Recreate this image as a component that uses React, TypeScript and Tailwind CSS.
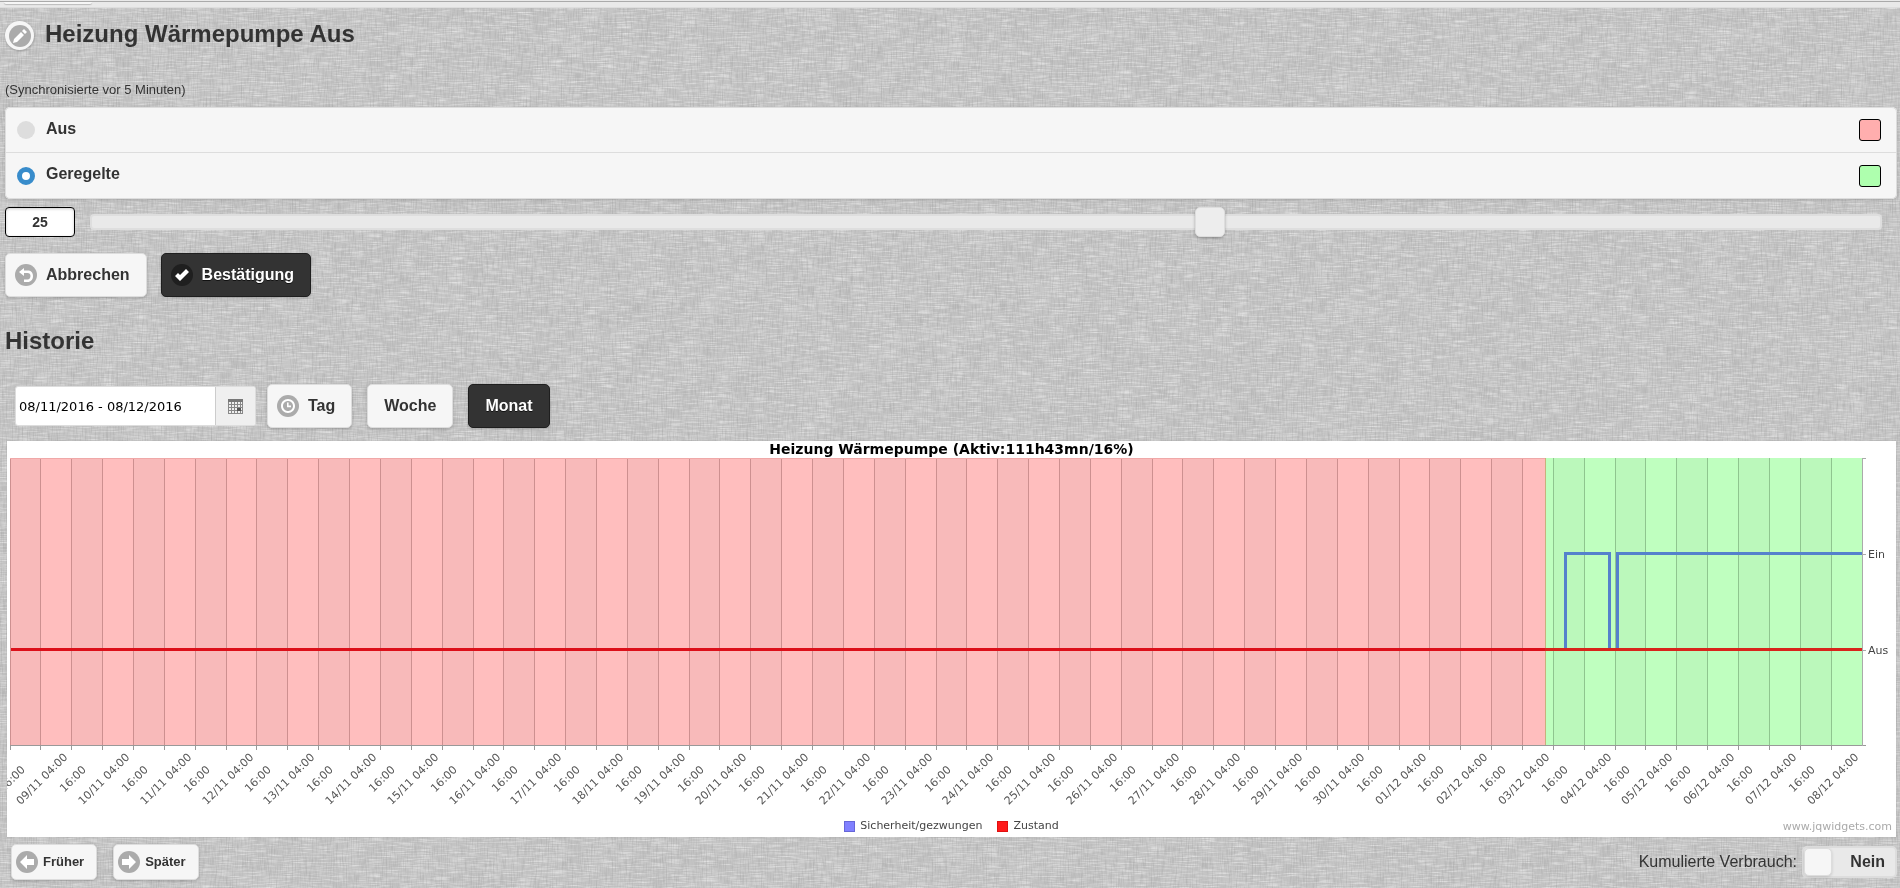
import React, { useLayoutEffect, useRef, useState } from 'react';
import clsx from 'clsx';

const ICONS = {
  edit: 'M1,10l-1,4l4-1l7-7L8,3L1,10z M11,0L9,2l3,3l2-2L11,0z',
  check: 'M14,4L11,1L5,7L3,5L0,8L5,13z',
  back: 'M5,0L0,4L5,8V5H8.5C10.4,5,11.5,6.2,11.5,8S10.4,11.5,8.5,11.5H5V14H8.5C12,14,14,11.5,14,8S12,2.5,8.5,2.5H5z',
  left: 'M7,4V0L0,7L7,14V10H14V4z',
  right: 'M7,4V0L14,7L7,14V10H0V4z',
  clock: 'M7,0C3.1,0,0,3.1,0,7s3.1,7,7,7s7-3.1,7-7S10.9,0,7,0z M7,12c-2.8,0-5-2.2-5-5s2.2-5,5-5s5,2.2,5,5S9.8,12,7,12z M6,3.5h1.6V6.6H10V8.2H6z',
};

function RoundIcon({ name, dark }: { name: keyof typeof ICONS; dark?: boolean }) {
  return (
    <span className={clsx('flex size-[22px] shrink-0 items-center justify-center rounded-full', dark ? 'bg-[#1f1f1f]' : 'bg-[#ababab]')}>
      <svg viewBox="0 0 14 14" className="size-[14px]" fill="#fff" fillRule="evenodd">
        <path d={ICONS[name]} />
      </svg>
    </span>
  );
}

interface ButtonProps {
  icon?: keyof typeof ICONS;
  active?: boolean;
  small?: boolean;
  onClick?: () => void;
  children: React.ReactNode;
}

function Button({ icon, active, small, onClick, children }: ButtonProps) {
  return (
    <button
      type="button"
      onClick={onClick}
      className={clsx(
        'flex items-center rounded-[5px] border font-bold shadow-[0_1px_3px_rgba(0,0,0,0.2)]',
        active ? 'border-[#1f1f1f] bg-[#333] text-white [text-shadow:0_1px_0_#111]' : 'border-[#ddd] bg-[#f6f6f6] text-[#333]',
        small ? 'h-9 gap-[5px] pl-1 pr-3 text-[13px]' : 'h-11 gap-[9px] text-base',
        !small && (icon ? 'pl-[9px] pr-4' : 'px-4')
      )}
    >
      {icon && <RoundIcon name={icon} dark={active} />}
      <span>{children}</span>
    </button>
  );
}

// Woven linen background: fine horizontal and vertical threads over soft blotches
function Linen() {
  return (
    <svg className="pointer-events-none fixed inset-0 -z-10 size-full" aria-hidden="true">
      <filter id="weft" x="0" y="0" width="100%" height="100%" colorInterpolationFilters="sRGB">
        <feTurbulence type="fractalNoise" baseFrequency="0.06 0.8" numOctaves="2" seed="4" />
        <feColorMatrix values="0 0 0 0 1  0 0 0 0 1  0 0 0 0 1  1.4 0 0 0 -0.6" />
      </filter>
      <filter id="warp" x="0" y="0" width="100%" height="100%" colorInterpolationFilters="sRGB">
        <feTurbulence type="fractalNoise" baseFrequency="0.8 0.07" numOctaves="2" seed="9" />
        <feColorMatrix values="0 0 0 0 0.5  0 0 0 0 0.5  0 0 0 0 0.5  1.4 0 0 0 -0.6" />
      </filter>
      <filter id="blotch" x="0" y="0" width="100%" height="100%" colorInterpolationFilters="sRGB">
        <feTurbulence type="fractalNoise" baseFrequency="0.03 0.04" numOctaves="2" seed="2" />
        <feColorMatrix values="0 0 0 0 1  0 0 0 0 1  0 0 0 0 1  0.8 0 0 0 -0.3" />
      </filter>
      <rect width="100%" height="100%" fill="#c2c2c2" />
      <rect width="100%" height="100%" filter="url(#blotch)" opacity="0.25" />
      <rect width="100%" height="100%" filter="url(#weft)" opacity="0.8" />
      <rect width="100%" height="100%" filter="url(#warp)" opacity="0.4" />
    </svg>
  );
}

const SLOTS = 60;
const TOP = 17;
const STEP = 96;
const BOTTOM = TOP + 3 * STEP;
const Y_ON = TOP + STEP;
const Y_OFF = TOP + 2 * STEP;

// Slots are 12 hours long and start on 08/11 at 16:00
function slotLabel(i: number) {
  if (i % 2 === 0) return '16:00';
  const date = new Date(2016, 10, 9 + (i - 1) / 2);
  const pad = (n: number) => String(n).padStart(2, '0');
  return `${pad(date.getDate())}/${pad(date.getMonth() + 1)} 04:00`;
}

function HistoryChart() {
  const ref = useRef<HTMLDivElement>(null);
  const [width, setWidth] = useState(0);

  useLayoutEffect(() => {
    const el = ref.current;
    if (!el) return;
    const update = () => setWidth(el.clientWidth);
    update();
    const observer = new ResizeObserver(update);
    observer.observe(el);
    return () => observer.disconnect();
  }, []);

  const left = 3;
  const right = Math.max(width - 34, left + SLOTS);
  const x = (slot: number) => Math.floor(left + ((right - left) * slot) / SLOTS);
  const change = x(49.75);
  const slots = Array.from({ length: SLOTS }, (_, i) => i);

  return (
    <div ref={ref} className="ml-[7px] mr-1 overflow-hidden bg-white shadow-[0_0_1px_#999]">
      <h3 className="-mb-[17px] text-center font-[DejaVu_Sans,sans-serif] text-[14px] leading-[17px] font-bold text-black">
        Heizung Wärmepumpe (Aktiv:111h43mn/16%)
      </h3>
      <svg width="100%" height="376" className="block font-[DejaVu_Sans,sans-serif] text-[11px]">
        <rect x={left} y={TOP} width={change - left} height={BOTTOM - TOP} fill="#ffbebe" />
        <rect x={change} y={TOP} width={right - change} height={BOTTOM - TOP} fill="#bfffbf" />
        {slots.filter((i) => i % 2 === 0).map((i) => (
          <rect key={i} x={x(i)} y={TOP} width={x(i + 1) - x(i)} height={BOTTOM - TOP} fill="#888" opacity="0.06" />
        ))}
        <g shapeRendering="crispEdges">
          {slots.map((i) => (
            <React.Fragment key={i}>
              <line x1={x(i) + 0.5} x2={x(i) + 0.5} y1={TOP} y2={BOTTOM} stroke={x(i) < change ? '#cd9090' : '#8fc58f'} />
              <line x1={x(i) + 0.5} x2={x(i) + 0.5} y1={BOTTOM} y2={BOTTOM + 4} stroke="#999" />
            </React.Fragment>
          ))}
          <line x1={change + 0.5} x2={change + 0.5} y1={TOP} y2={BOTTOM} stroke="#c9b07c" />
          <line x1={left} x2={change} y1={TOP + 0.5} y2={TOP + 0.5} stroke="#f0a8a8" />
          <line x1={left} x2={right + 4} y1={BOTTOM - 0.5} y2={BOTTOM - 0.5} stroke="#999" />
          <line x1={right + 0.5} x2={right + 0.5} y1={TOP} y2={BOTTOM} stroke="#aaa" />
          {[TOP, Y_ON, Y_OFF].map((y) => (
            <line key={y} x1={right} x2={right + 4} y1={y + 0.5} y2={y + 0.5} stroke="#aaa" />
          ))}
        </g>
        <path
          d={`M${x(50.4) + 0.5},${Y_OFF}V${Y_ON - 0.5}H${x(51.82) + 0.5}V${Y_OFF} M${x(52.08) + 0.5},${Y_OFF}V${Y_ON - 0.5}H${right}`}
          fill="none"
          stroke="#5581cc"
          strokeWidth="3"
        />
        <line x1={left + 1} x2={change} y1={Y_OFF - 0.5} y2={Y_OFF - 0.5} stroke="#dc101a" strokeWidth="3" />
        <line x1={change} x2={right} y1={Y_OFF - 0.5} y2={Y_OFF - 0.5} stroke="#d8241c" strokeWidth="3" />
        <text x={right + 6} y={Y_ON + 4} fill="#444">Ein</text>
        <text x={right + 6} y={Y_OFF + 4} fill="#444">Aus</text>
        {slots.map((i) => (
          <text key={i} transform={`translate(${x(i) + 2} 338) rotate(-45)`} textAnchor="middle" dominantBaseline="central" fill="#555">
            {slotLabel(i)}
          </text>
        ))}
      </svg>
      <div className="grid h-5 grid-cols-[1fr_auto_1fr] items-start font-[DejaVu_Sans,sans-serif] text-[11px] leading-[18px] text-[#444]">
        <ul className="col-start-2 flex gap-[15px]">
          <li className="flex items-center gap-[5px]"><i className="size-[11px] border border-[#6666d8] bg-[#8080ff]" />Sicherheit/gezwungen</li>
          <li className="flex items-center gap-[5px]"><i className="size-[11px] border border-[#e01010] bg-[#ff1a1a]" />Zustand</li>
        </ul>
        <a href="https://www.jqwidgets.com" className="justify-self-end pt-px pr-1 text-[#aaa]">www.jqwidgets.com</a>
      </div>
    </div>
  );
}

const MODES = [
  { id: 'off', label: 'Aus', swatch: 'bg-[#ffaeae]' },
  { id: 'regulated', label: 'Geregelte', swatch: 'bg-[#aeffae]' },
];

export default function App() {
  const [mode, setMode] = useState('regulated');
  const [value, setValue] = useState(25);
  const [range, setRange] = useState('month');
  const [dates, setDates] = useState('08/11/2016 - 08/12/2016');
  const [cumulative, setCumulative] = useState(false);

  return (
    <div className="relative isolate min-h-screen font-[Liberation_Sans,Arial,sans-serif] text-[#333]">
      <Linen />
      <div className="h-2 border-b border-[#ddd] bg-[#e9e9e9] pt-px">
        <div className="h-[3px] border-t border-[#aaa] pl-1">
          <div className="h-[2px] w-[88px] rounded-b bg-[#f6f6f6] shadow-[0_1px_1px_#bbb]" />
        </div>
      </div>

      <header className="flex items-start gap-[11px] pt-[13px] pl-[5px]">
        <button type="button" aria-label="Bearbeiten" className="flex size-[29px] items-center justify-center rounded-full bg-[#f6f6f6] shadow-[0_1px_3px_rgba(0,0,0,0.25)]">
          <RoundIcon name="edit" />
        </button>
        <h1 className="text-2xl leading-[26px] font-bold">Heizung Wärmepumpe Aus</h1>
      </header>

      <form className="pr-[3px] pl-[5px]" onSubmit={(e) => e.preventDefault()}>
        <p className="pt-[31px] text-[13px] leading-[18px]">(Synchronisierte vor 5 Minuten)</p>

        <fieldset className="mt-2 divide-y divide-[#ddd] rounded-[5px] border border-[#ddd] bg-[#f6f6f6] shadow-[0_1px_3px_rgba(0,0,0,0.15)]">
          {MODES.map((m) => (
            <label key={m.id} className="flex h-[45px] items-center pr-[15px] pl-[11px] font-bold">
              <input
                type="radio"
                name="mode"
                checked={mode === m.id}
                onChange={() => setMode(m.id)}
                className="size-[18px] appearance-none rounded-full bg-[#ddd] checked:border-[5px] checked:border-[#388ccb] checked:bg-white"
              />
              <span className="flex-1 pb-[3px] pl-[11px]">{m.label}</span>
              <span className={clsx('size-[22px] rounded-[3px] border border-black', m.swatch)} />
            </label>
          ))}
        </fieldset>

        <div className="mt-2 flex items-center gap-[15px] pr-[15px]">
          <input
            type="text"
            aria-label="Wert"
            value={value}
            onChange={(e) => setValue(Number(e.target.value) || 0)}
            className="h-[30px] w-[70px] rounded border border-black bg-white text-center text-[14px] font-bold shadow-[inset_0_1px_3px_rgba(0,0,0,0.2)]"
          />
          <div className="flex h-4 flex-1 items-center rounded border-2 border-[#dedede] bg-[#e9e9e9]">
            <input
              type="range"
              aria-label="Wert wählen"
              min={0}
              max={40}
              value={value}
              onChange={(e) => setValue(Number(e.target.value))}
              className="-mx-[17px] h-[30px] w-[calc(100%+34px)] shrink-0 appearance-none bg-transparent [&::-webkit-slider-thumb]:size-[30px] [&::-webkit-slider-thumb]:appearance-none [&::-webkit-slider-thumb]:rounded-[5px] [&::-webkit-slider-thumb]:border [&::-webkit-slider-thumb]:border-[#ddd] [&::-webkit-slider-thumb]:bg-[#ededed] [&::-webkit-slider-thumb]:shadow-[0_1px_3px_rgba(0,0,0,0.3)]"
            />
          </div>
        </div>

        <div className="mt-4 flex gap-[14px]">
          <Button icon="back">Abbrechen</Button>
          <Button icon="check" active>Bestätigung</Button>
        </div>
      </form>

      <h2 className="pt-8 pl-[5px] text-2xl leading-6 font-bold">Historie</h2>

      <div className="flex items-center gap-[15px] pt-[31px] pb-[13px] pl-[15px]">
        <div className="-mr-1 flex h-10 overflow-hidden rounded-[3px] border border-[#ddd] bg-white">
          <input
            type="text"
            aria-label="Zeitraum"
            value={dates}
            onChange={(e) => setDates(e.target.value)}
            className="w-[199px] pt-[2px] pl-[3px] font-[DejaVu_Sans,sans-serif] text-[13px] text-black"
          />
          <button type="button" aria-label="Kalender" className="flex w-10 items-center justify-center border-l border-[#ccc] bg-[#efefef]">
            <svg viewBox="0 0 15 15" className="size-[15px]" fill="none" stroke="#888" shapeRendering="crispEdges">
              <path d="M0.5,0v15 M3.5,3v12 M6.5,3v12 M9.5,3v12 M12.5,3v12 M14.5,0v15 M0,5.5h15 M0,8.5h15 M0,11.5h15 M0,14.5h15" />
              <path d="M0,1.5h15" stroke="#777" strokeWidth="3" />
              <path d="M9,10.5h4" stroke="#555" strokeWidth="3" />
            </svg>
          </button>
        </div>
        <Button icon="clock" active={range === 'day'} onClick={() => setRange('day')}>Tag</Button>
        <Button active={range === 'week'} onClick={() => setRange('week')}>Woche</Button>
        <Button active={range === 'month'} onClick={() => setRange('month')}>Monat</Button>
      </div>

      <HistoryChart />

      <footer className="flex items-center pt-[7px] pr-[3px] pb-2 pl-[11px]">
        <div className="flex flex-1 gap-4">
          <Button icon="left" small>Früher</Button>
          <Button icon="right" small>Später</Button>
        </div>
        <label className="flex items-center gap-[5px]">
          Kumulierte Verbrauch:
          <input type="checkbox" className="peer sr-only" checked={cumulative} onChange={(e) => setCumulative(e.target.checked)} />
          <span className="flex h-8 w-[95px] items-center justify-between rounded-[5px] border-2 border-[#ddd] bg-[#e9e9e9] pr-[10px] font-bold peer-checked:flex-row-reverse peer-checked:pr-0 peer-checked:pl-[10px]">
            <span className="size-7 rounded-[5px] border border-[#ddd] bg-[#f6f6f6] shadow-[0_1px_3px_rgba(0,0,0,0.15)]" />
            {cumulative ? 'Ja' : 'Nein'}
          </span>
        </label>
      </footer>
    </div>
  );
}
